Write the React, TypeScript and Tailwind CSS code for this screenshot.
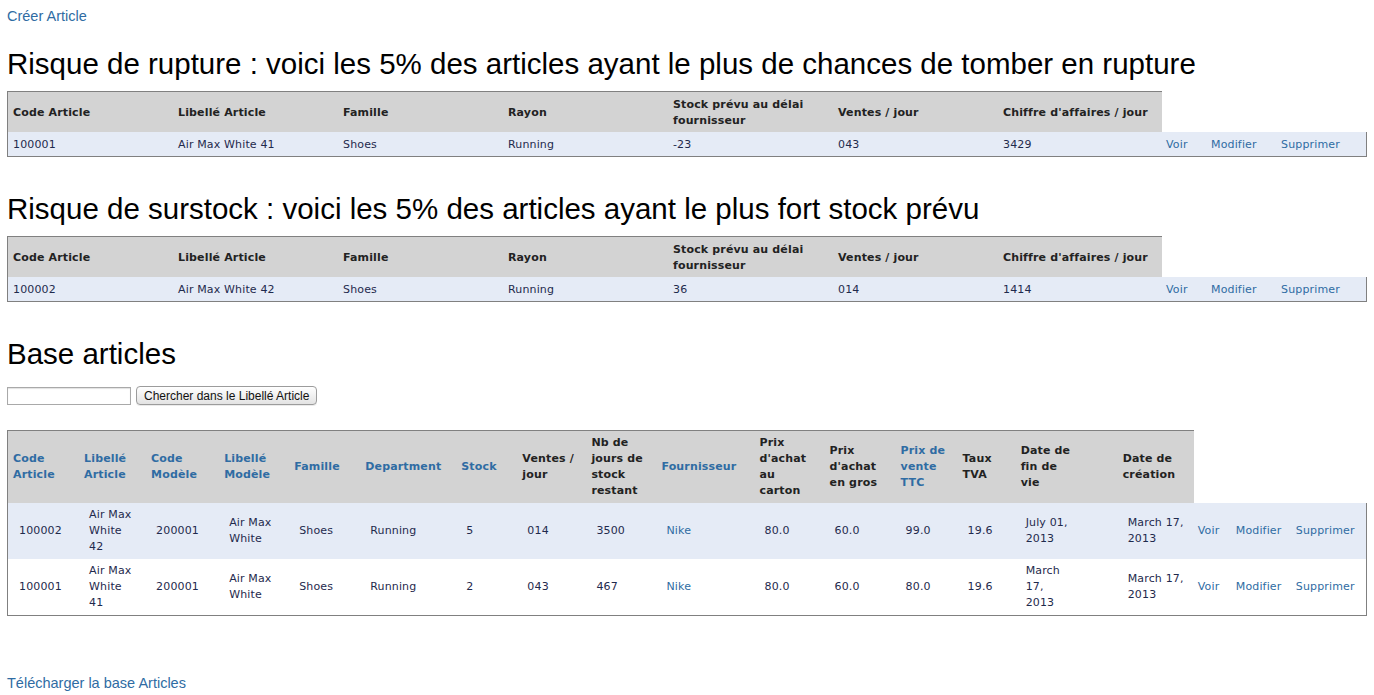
import React from 'react';

const LINK = 'text-[#2f6ca3]';
const DATA = 'text-[#1f2a4d]';
const TABLE_FONT = "text-[11px] leading-[16px] tracking-[0.15px] [font-family:'DejaVu_Sans',Verdana,sans-serif]";

type RiskRow = string[];

const riskHeaders: React.ReactNode[] = [
  'Code Article',
  'Libellé Article',
  'Famille',
  'Rayon',
  <>Stock prévu au délai<br />fournisseur</>,
  'Ventes / jour',
  "Chiffre d'affaires / jour",
];

function RiskTable({ row }: { row: RiskRow }) {
  return (
    <table className={`table-fixed border-separate border-spacing-0 w-[1360px] ${TABLE_FONT}`}>
      <colgroup>
        {Array.from({ length: 7 }).map((_, i) => (
          <col key={i} className="w-[165px]" />
        ))}
        <col className="w-[45px]" />
        <col className="w-[70px]" />
        <col className="w-[90px]" />
      </colgroup>
      <thead>
        <tr>
          {riskHeaders.map((h, i) => (
            <th
              key={i}
              className={`bg-[#d3d3d3] border-t border-[#808080] px-[6px] pt-[5px] pb-[3px] text-left align-middle font-bold text-[#222] whitespace-nowrap ${i === 0 ? 'border-l pl-[5px]' : ''}`}
            >
              {h}
            </th>
          ))}
        </tr>
      </thead>
      <tbody>
        <tr className="bg-[#e5ebf6]">
          {row.map((v, i) => (
            <td
              key={i}
              className={`px-[6px] pt-[5px] pb-[3px] border-b border-[#808080] align-middle ${DATA} ${i === 0 ? 'border-l pl-[5px]' : ''}`}
            >
              {v}
            </td>
          ))}
          {['Voir', 'Modifier', 'Supprimer'].map((label, i) => (
            <td
              key={label}
              className={`pl-[4px] pt-[5px] pb-[3px] border-b border-[#808080] align-middle ${LINK} ${i === 2 ? 'border-r' : ''}`}
            >
              <a href="#">{label}</a>
            </td>
          ))}
        </tr>
      </tbody>
    </table>
  );
}

// colonnes de la base articles : [titre, triable, largeur]
const baseCols: [React.ReactNode, boolean, string][] = [
  [<>Code<br />Article</>, true, 'w-[71px]'],
  [<>Libellé<br />Article</>, true, 'w-[67px]'],
  [<>Code<br />Modèle</>, true, 'w-[73px]'],
  [<>Libellé<br />Modèle</>, true, 'w-[70px]'],
  ['Famille', true, 'w-[71px]'],
  ['Department', true, 'w-[96px]'],
  ['Stock', true, 'w-[61px]'],
  [<>Ventes /<br />jour</>, false, 'w-[69px]'],
  [<>Nb de<br />jours de<br />stock<br />restant</>, false, 'w-[70px]'],
  ['Fournisseur', true, 'w-[98px]'],
  [<>Prix<br />d'achat<br />au<br />carton</>, false, 'w-[70px]'],
  [<>Prix<br />d'achat<br />en gros</>, false, 'w-[71px]'],
  [<>Prix de<br />vente<br />TTC</>, true, 'w-[62px]'],
  [<>Taux<br />TVA</>, false, 'w-[58px]'],
  [<>Date de<br />fin de<br />vie</>, false, 'w-[102px]'],
  [<>Date de<br />création</>, false, 'w-[77px]'],
];

const baseRows: React.ReactNode[][] = [
  [
    '100002',
    <>Air Max<br />White<br />42</>,
    '200001',
    <>Air Max<br />White</>,
    'Shoes',
    'Running',
    '5',
    '014',
    '3500',
    'Nike',
    '80.0',
    '60.0',
    '99.0',
    '19.6',
    <>July 01,<br />2013</>,
    <>March 17,<br />2013</>,
  ],
  [
    '100001',
    <>Air Max<br />White<br />41</>,
    '200001',
    <>Air Max<br />White</>,
    'Shoes',
    'Running',
    '2',
    '043',
    '467',
    'Nike',
    '80.0',
    '60.0',
    '80.0',
    '19.6',
    <>March<br />17,<br />2013</>,
    <>March 17,<br />2013</>,
  ],
];

function BaseTable() {
  return (
    <table className={`table-fixed border-separate border-spacing-0 w-[1360px] ${TABLE_FONT}`}>
      <colgroup>
        {baseCols.map(([, , w], i) => (
          <col key={i} className={w} />
        ))}
        <col className="w-[38px]" />
        <col className="w-[60px]" />
        <col className="w-[75px]" />
      </colgroup>
      <thead>
        <tr>
          {baseCols.map(([h, sortable], i) => (
            <th
              key={i}
              className={`bg-[#d3d3d3] border-t border-[#808080] px-[6px] py-[4px] text-left align-middle font-bold whitespace-nowrap ${sortable ? LINK : 'text-[#222]'} ${i === 0 ? 'border-l pl-[5px]' : ''}`}
            >
              {h}
            </th>
          ))}
        </tr>
      </thead>
      <tbody>
        {baseRows.map((row, r) => {
          const last = r === baseRows.length - 1;
          const b = last ? 'border-b border-[#808080]' : '';
          return (
            <tr key={r} className={r === 0 ? 'bg-[#e5ebf6]' : 'bg-white'}>
              {row.map((v, i) => (
                <td
                  key={i}
                  className={`pl-[11px] pr-[4px] py-[4px] align-middle whitespace-nowrap ${b} ${i === 9 ? LINK : DATA} ${i === 0 ? 'border-l border-[#808080] pl-[9px]' : ''}`}
                >
                  {v}
                </td>
              ))}
              {['Voir', 'Modifier', 'Supprimer'].map((label, i) => (
                <td
                  key={label}
                  className={`pl-[4px] py-[4px] align-middle ${b} ${LINK} ${i === 2 ? 'border-r border-[#808080]' : ''}`}
                >
                  <a href="#">{label}</a>
                </td>
              ))}
            </tr>
          );
        })}
      </tbody>
    </table>
  );
}

export default function App() {
  return (
    <div className="min-h-[695px] bg-white pl-[7px] pt-[8px] [font-family:'Liberation_Sans',Arial,sans-serif]">
      <a href="#" className={`block text-[14.5px] leading-[16px] ${LINK}`}>
        Créer Article
      </a>

      <h1 className="mt-[23px] mb-[10px] text-[29.5px] leading-[34px] font-normal text-black">
        Risque de rupture : voici les 5% des articles ayant le plus de chances de tomber en rupture
      </h1>
      <RiskTable row={['100001', 'Air Max White 41', 'Shoes', 'Running', '-23', '043', '3429']} />

      <h1 className="mt-[35px] mb-[10px] text-[29.5px] leading-[34px] font-normal text-black">
        Risque de surstock : voici les 5% des articles ayant le plus fort stock prévu
      </h1>
      <RiskTable row={['100002', 'Air Max White 42', 'Shoes', 'Running', '36', '014', '1414']} />

      <h1 className="mt-[35px] text-[29.5px] leading-[34px] font-normal text-black">Base articles</h1>

      <form className="mt-[15px] flex items-center gap-[5px]" onSubmit={(e) => e.preventDefault()}>
        <input
          type="text"
          className="w-[124px] h-[18px] border border-[#a9a9a9] bg-white px-[2px] text-[12px] shadow-[inset_0_1px_1px_rgba(0,0,0,0.12)] outline-none"
        />
        <button
          type="submit"
          className="h-[19px] px-[7px] rounded-[4px] border border-[#9c9c9c] bg-gradient-to-b from-white to-[#e3e3e3] text-[12px] leading-[16px] text-[#111] shadow-[0_1px_0_rgba(0,0,0,0.08)]"
        >
          Chercher dans le Libellé Article
        </button>
      </form>

      <div className="mt-[25px]">
        <BaseTable />
      </div>

      <a href="#" className={`block mt-[59px] text-[14.5px] leading-[16px] ${LINK}`}>
        Télécharger la base Articles
      </a>
    </div>
  );
}
